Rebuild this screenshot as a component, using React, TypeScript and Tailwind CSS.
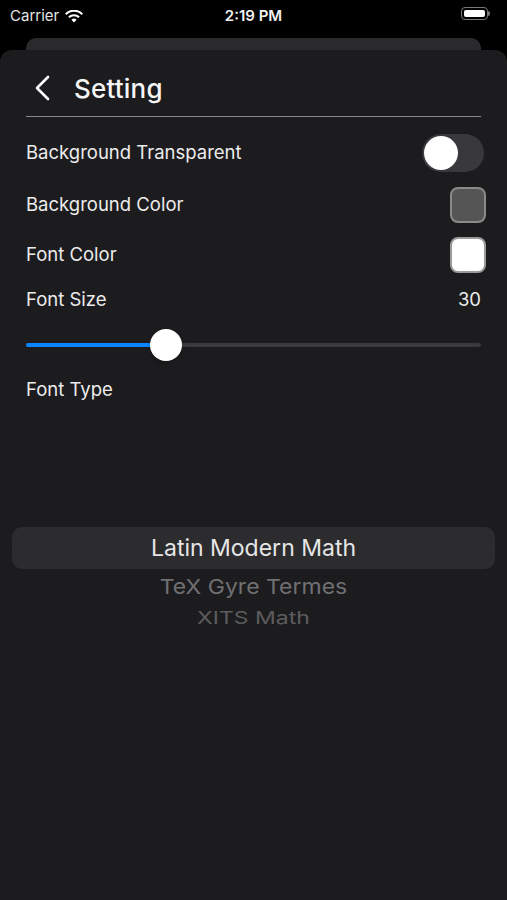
export default function App() {
	return (
		<div className="relative w-[507px] h-[900px] bg-black overflow-hidden font-['Inter',sans-serif] text-white">
			{/* status bar */}
			<div className="h-[38px] flex items-start justify-between px-[10px] pt-[5px]">
				<div className="flex items-center gap-[6px] w-[120px]">
					<span className="text-[15px] text-[#e5e5e5]">Carrier</span>
					<svg width="18" height="13" viewBox="0 0 18 13" fill="#fff">
						<path d="M9 12.5 6.4 9.8a3.7 3.7 0 0 1 5.2 0Z" />
						<path d="M4.7 8.1 3.2 6.6a8.2 8.2 0 0 1 11.6 0l-1.5 1.5a6.1 6.1 0 0 0-8.6 0Z" />
						<path d="M1.5 4.9 0 3.4a12.7 12.7 0 0 1 18 0l-1.5 1.5a10.6 10.6 0 0 0-15 0Z" />
					</svg>
				</div>
				<span className="text-[15px] font-semibold text-[#f2f2f2]">2:19 PM</span>
				<div className="w-[120px] flex justify-end pr-[7px] pt-[2px]">
					<div className="flex items-center">
						<div className="w-[27px] h-[13px] rounded-[4px] border border-[#777] p-[2px]">
							<div className="w-full h-full rounded-[2px] bg-white" />
						</div>
						<div className="w-[2px] h-[5px] rounded-r-sm bg-[#777]" />
					</div>
				</div>
			</div>

			{/* behind card */}
			<div className="mx-[26px] h-[20px] rounded-t-[10px] bg-[#2a2a2c]" />

			{/* sheet */}
			<div className="absolute left-0 right-0 top-[50px] bottom-0 rounded-t-[12px] bg-[#1c1c1e]">
				<div className="px-[26px]">
					<div className="h-[67px] flex items-center gap-[23px] pl-[9px] pt-[10px] border-b border-[#8a8a8a]">
						<svg width="16" height="26" viewBox="0 0 16 26" fill="none" stroke="#fff" strokeWidth="2.6" strokeLinecap="round" strokeLinejoin="round">
							<path d="M13 2 2 13l11 11" />
						</svg>
						<span className="text-[26px] font-medium text-[#f5f5f5] tracking-[0.2px]">Setting</span>
					</div>

					<div className="h-[71px] flex items-center justify-between">
						<span className="text-[18.5px] text-[#ececec]">Background Transparent</span>
						<div className="w-[62px] h-[38px] rounded-full bg-[#39393d] p-[2px] -mr-[3px]">
							<div className="w-[34px] h-[34px] rounded-full bg-white" />
						</div>
					</div>
					<div className="h-[33px] flex items-center justify-between">
						<span className="text-[18.5px] text-[#ececec]">Background Color</span>
						<div className="w-[36px] h-[36px] rounded-[8px] bg-[#555] border-2 border-[#8a8a8a] -mr-[5px]" />
					</div>
					<div className="h-[68px] flex items-center justify-between">
						<span className="text-[18.5px] text-[#ececec]">Font Color</span>
						<div className="w-[36px] h-[36px] rounded-[8px] bg-white border-2 border-[#9a9a9a] -mr-[5px]" />
					</div>
					<div className="h-[22px] flex items-center justify-between">
						<span className="text-[18.5px] text-[#ececec]">Font Size</span>
						<span className="text-[18.5px] text-[#ececec]">30</span>
					</div>

					<div className="relative h-[68px] flex items-center">
						<div className="w-full h-[4px] rounded-full bg-[#3a3a3c] flex">
							<div className="w-[140px] h-full rounded-l-full bg-[#0a84ff]" />
						</div>
						<div className="absolute left-[124px] top-[18px] w-[32px] h-[32px] rounded-full bg-white shadow-md" />
					</div>

					<div className="h-[21px] flex items-center">
						<span className="text-[18.5px] text-[#ececec]">Font Type</span>
					</div>
				</div>

				{/* picker */}
				<div className="mt-[127px] px-[12px]">
					<div className="h-[42px] rounded-[10px] bg-[#2c2c2e] flex items-center justify-center">
						<span className="text-[23px] text-[#e6e6e6]">Latin Modern Math</span>
					</div>
					<div className="h-[36px] flex items-center justify-center">
						<span className="text-[23px] text-[#707072] scale-y-[0.9]">TeX Gyre Termes</span>
					</div>
					<div className="h-[26px] flex items-center justify-center">
						<span className="text-[23px] text-[#5c5c5e] scale-y-[0.78]">XITS Math</span>
					</div>
				</div>
			</div>
		</div>
	);
}
